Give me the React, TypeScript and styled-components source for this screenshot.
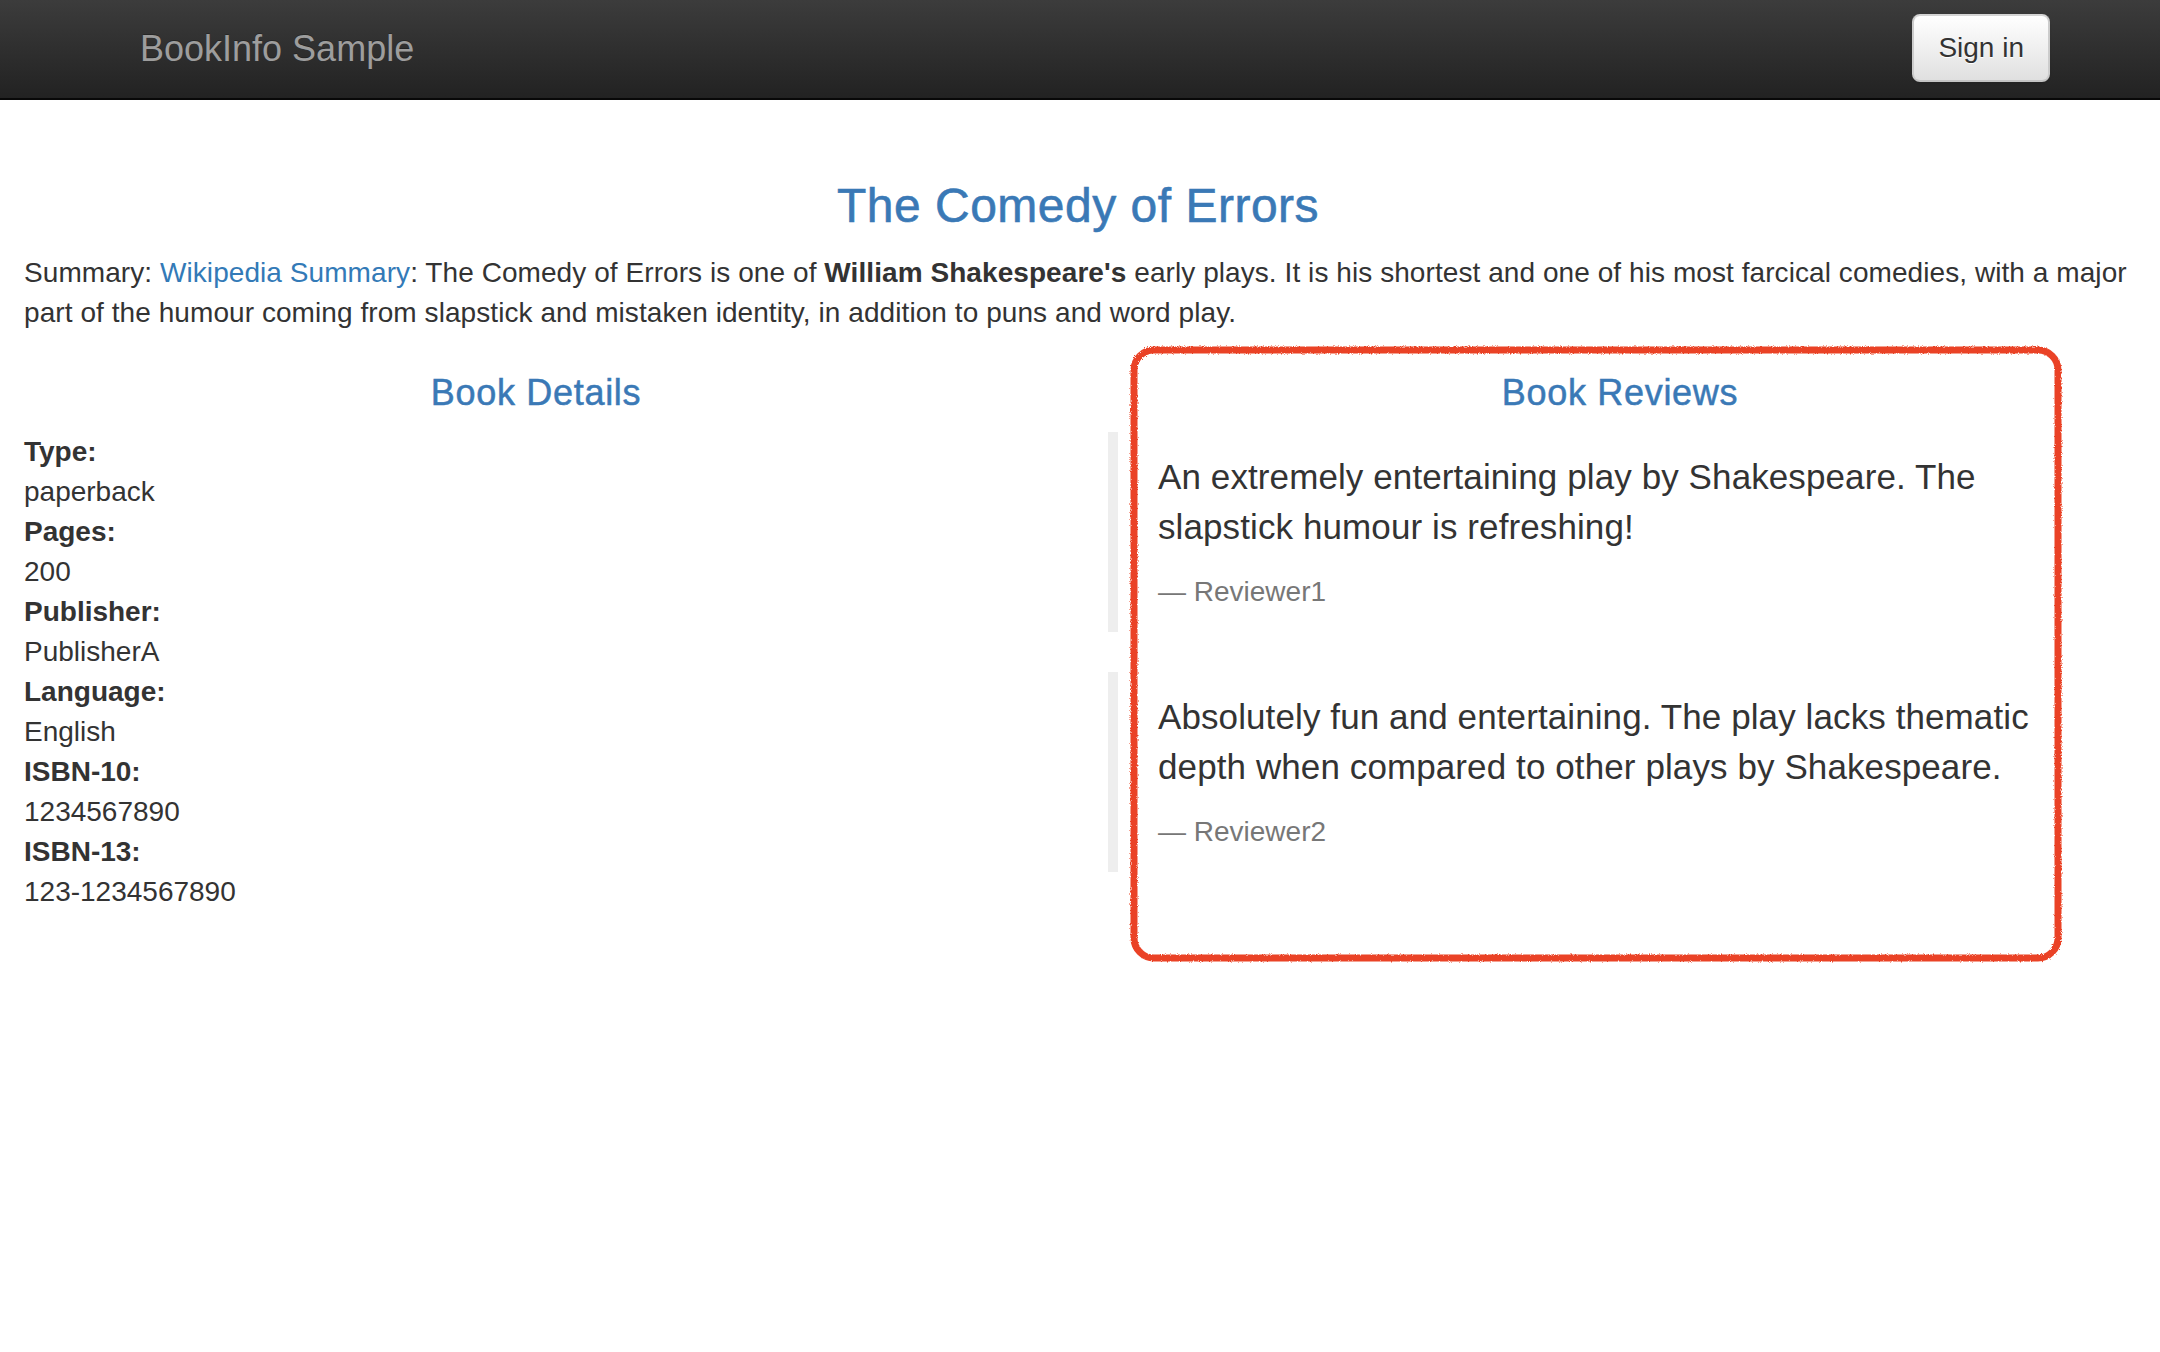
import React from "react";
import styled, { createGlobalStyle } from "styled-components";

const GlobalStyle = createGlobalStyle`
  * { box-sizing: border-box; }
  html, body { margin: 0; padding: 0; background: #fff; }
  body {
    font-family: "Liberation Sans", Helvetica, Arial, sans-serif;
    font-size: 28px;
    line-height: 40px;
    color: #333;
    min-height: 1352px;
  }
`;

const Navbar = styled.nav`
  height: 100px;
  border-bottom: 2px solid #080808;
  background: linear-gradient(to bottom, #3c3c3c 0%, #222 100%);
  padding: 0 110px;
  display: flex;
  justify-content: space-between;
  align-items: flex-start;
`;

const Brand = styled.a`
  display: block;
  padding: 29px 30px 31px;
  font-size: 36px;
  line-height: 40px;
  color: #9d9d9d;
  text-decoration: none;
  text-shadow: 0 -1px 0 rgba(0, 0, 0, 0.25);
`;

const SignInButton = styled.button`
  margin-top: 14px;
  height: 68px;
  padding: 12px 24px;
  font-family: inherit;
  font-size: 28px;
  line-height: 40px;
  color: #333;
  background: linear-gradient(to bottom, #fff 0%, #e0e0e0 100%);
  border: 2px solid #ccc;
  border-color: #d4d4d4 #ccc #c4c4c4;
  border-radius: 8px;
  text-shadow: 0 1px 0 #fff;
  box-shadow: inset 0 2px 0 rgba(255, 255, 255, 0.15), 0 2px 2px rgba(0, 0, 0, 0.075);
  cursor: pointer;
`;

const Main = styled.main`
  padding: 40px 28px 120px 24px;
`;

const Title = styled.h3`
  margin: 40px 0 20px;
  font-size: 48px;
  line-height: 52.8px;
  font-weight: 500;
  letter-spacing: 0.5px;
  text-align: center;
  color: #3a79b6;
  -webkit-text-stroke: 0.6px #3a79b6;
`;

const Summary = styled.div`
  letter-spacing: 0.07px;
`;

const Link = styled.a`
  color: #337ab7;
  text-decoration: none;
`;

const Columns = styled.div`
  display: grid;
  grid-template-columns: 1fr 1fr;
  column-gap: 60px;
`;

const Column = styled.section`
  position: relative;
`;

const SectionTitle = styled.h4`
  margin: 40px 0 20px;
  font-size: 36px;
  line-height: 39.6px;
  font-weight: 500;
  letter-spacing: 0.7px;
  text-align: center;
  color: #3a79b6;
  -webkit-text-stroke: 0.5px #3a79b6;
`;

const DetailList = styled.dl`
  margin: 0 0 40px;
`;

const Term = styled.dt`
  font-weight: 700;
  line-height: 40px;
`;

const Value = styled.dd`
  margin: 0;
  line-height: 40px;
`;

const Review = styled.blockquote`
  margin: 0 0 40px;
  padding: 20px 40px;
  border-left: 10px solid #eee;
  font-size: 35px;
  line-height: 50px;
`;

const ReviewText = styled.p`
  margin: 0 0 20px;
  letter-spacing: 0.1px;
`;

const ReviewFooter = styled.footer`
  font-size: 28px;
  line-height: 40px;
  color: #777;
  &::before {
    content: "\\2014 \\00A0";
  }
`;

const Annotation = styled.svg`
  position: absolute;
  left: 18px;
  top: 9px;
  width: 940px;
  height: 632px;
  pointer-events: none;
`;

const details: [string, string][] = [
  ["Type:", "paperback"],
  ["Pages:", "200"],
  ["Publisher:", "PublisherA"],
  ["Language:", "English"],
  ["ISBN-10:", "1234567890"],
  ["ISBN-13:", "123-1234567890"],
];

const reviews = [
  {
    text: "An extremely entertaining play by Shakespeare. The slapstick humour is refreshing!",
    author: "Reviewer1",
  },
  {
    text: "Absolutely fun and entertaining. The play lacks thematic depth when compared to other plays by Shakespeare.",
    author: "Reviewer2",
  },
];

export default function App() {
  return (
    <>
      <GlobalStyle />
      <Navbar>
        <Brand href="#">BookInfo Sample</Brand>
        <SignInButton type="button">Sign in</SignInButton>
      </Navbar>
      <Main>
        <Title>The Comedy of Errors</Title>
        <Summary>
          Summary: <Link href="#">Wikipedia Summary</Link>: The Comedy of Errors is one of{" "}
          <b>William Shakespeare's</b> early plays. It is his shortest and one of his most
          farcical comedies, with a major part of the humour coming from slapstick and mistaken
          identity, in addition to puns and word play.
        </Summary>
        <Columns>
          <Column>
            <SectionTitle>Book Details</SectionTitle>
            <DetailList>
              {details.map(([k, v]) => (
                <React.Fragment key={k}>
                  <Term>{k}</Term>
                  <Value>{v}</Value>
                </React.Fragment>
              ))}
            </DetailList>
          </Column>
          <Column>
            <SectionTitle>Book Reviews</SectionTitle>
            {reviews.map((r) => (
              <Review key={r.author}>
                <ReviewText>{r.text}</ReviewText>
                <ReviewFooter>{r.author}</ReviewFooter>
              </Review>
            ))}
            <Annotation viewBox="0 0 940 632" aria-hidden="true">
              <defs>
                <filter
                  id="rough"
                  filterUnits="userSpaceOnUse"
                  x="0"
                  y="0"
                  width="940"
                  height="632"
                >
                  <feTurbulence type="fractalNoise" baseFrequency="0.9" numOctaves="2" seed="3" result="noise" />
                  <feDisplacementMap in="SourceGraphic" in2="noise" scale="3" />
                </filter>
              </defs>
              <rect
                x="8"
                y="8"
                width="924"
                height="608"
                rx="20"
                ry="20"
                fill="none"
                stroke="#ea4327"
                strokeWidth="7"
                filter="url(#rough)"
              />
            </Annotation>
          </Column>
        </Columns>
      </Main>
    </>
  );
}
